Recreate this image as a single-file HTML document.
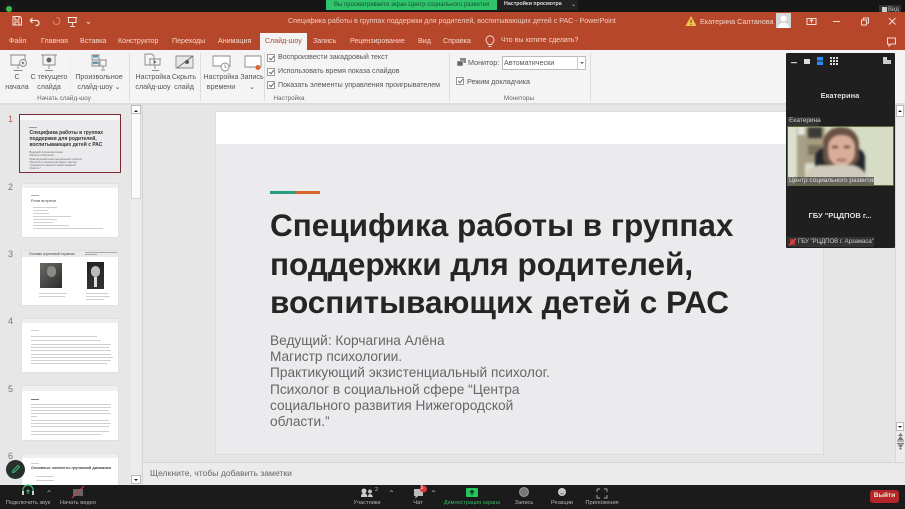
<!DOCTYPE html>
<html lang="ru"><head><meta charset="utf-8"><title>PowerPoint</title>
<style>
html,body{margin:0;padding:0}
body{width:905px;height:509px;overflow:hidden;position:relative;background:#e6e6e6;font-family:"Liberation Sans","Noto Sans CJK SC",sans-serif;color:#444}
div{position:absolute;box-sizing:border-box}
.t{white-space:nowrap;line-height:1}
.c{text-align:center;transform:translateX(-50%)}
.tab{top:36px;font-size:7.100px;color:#f3d9cf;white-space:nowrap;line-height:10px}
.rb{font-size:7.100px;color:#555;white-space:nowrap;line-height:9.500px;text-align:center;transform:translateX(-50%)}
.gl{font-size:6.300px;color:#666;white-space:nowrap;line-height:8px;transform:translateX(-50%)}
.cb{width:8px;height:8px;border:1px solid #999;background:#fff}
.cb:after{content:"";position:absolute;left:1.500px;top:0;width:2px;height:4px;border:solid #666;border-width:0 1px 1px 0;transform:rotate(40deg)}
.sep{top:53px;width:1px;height:48px;background:#dcdcdc}
.chk{left:278px;font-size:7.100px;color:#555}
.num{font-size:9px;color:#777;left:8px;line-height:10px}
.th{left:21px;width:98px;background:#fff;border:1px solid #e0e0e0;overflow:hidden}
.ln{height:1px;background:#cfcfcf;left:8px}
.tb{top:500px;font-size:5.700px;color:#b5b5b5;white-space:nowrap;line-height:7px;transform:translateX(-50%)}
</style></head><body>

<!-- top zoom bar -->
<div style="left:0;top:0;width:905px;height:12px;background:#161616"></div>
<div style="left:326px;top:0;width:171px;height:10px;background:#2fc46b"></div>
<div class="t" style="left:334px;top:2px;font-size:6px;color:#14532d">Вы просматриваете экран Центр социального развития</div>
<div style="left:497px;top:0;width:81px;height:10px;background:#222"></div>
<div class="t" style="left:504px;top:2px;font-size:5.300px;color:#ddd;font-weight:bold">Настройки просмотра</div>
<div class="t" style="left:571px;top:2px;font-size:6px;color:#ccc">⌄</div>
<div style="left:879px;top:5px;width:22px;height:10px;background:#333"></div>
<div style="left:882px;top:7px;width:5px;height:5px;background:#ccc"></div>
<div class="t" style="left:888px;top:7px;font-size:6px;color:#bbb">Вид</div>
<div style="left:3px;top:3px;width:12px;height:12px;border-radius:6px;background:#1a1a1a"></div>
<div style="left:6px;top:6px;width:6px;height:6px;border-radius:3px;background:#3dba4e"></div>

<!-- title bar & tabs -->
<div style="left:0;top:12px;width:905px;height:38px;background:#b7472a"></div>
<svg style="position:absolute;left:0;top:12px" width="100" height="22" fill="none" stroke="#f5e4dd">
<path d="M13 4.500h7l1.500 1.500v7h-8.500zM15 5v3h4V5M15 13v-3h4v3" stroke-width="1"/>
<path d="M30 8.500h6.500q2.500 0 2.500 2.500t-2.500 2.500h-1M30 8.500l2.500-2.500M30 8.500l2.500 2.500" stroke-width="1.200"/>
<path d="M53 9a3.500 3.500 0 1 0 3.500-3.500" stroke="#d98a70" stroke-width="1"/>
<path d="M67.500 5.500h9.500M68.500 5.500v5h7.500v-5M72.500 10.500v3M70 14.500h5" stroke-width="1"/>
<path d="M87 10l1.500 1.500 1.500-1.500" stroke-width=".8"/>
</svg>
<div class="t" style="left:288px;top:18px;font-size:7.100px;color:#eecdc1">Специфика работы в группах поддержки для родителей, воспитывающих детей с РАС  -  PowerPoint</div>
<svg style="position:absolute;left:685px;top:15px" width="12" height="12"><path d="M6 1L11.500 11H.5z" fill="#f2c14e"/><path d="M6 4.500v3.500M6 9v1" stroke="#5a4015" stroke-width="1"/></svg>
<div class="t" style="left:700px;top:18px;font-size:7.200px;color:#efd5ca">Екатерина Салтанова</div>
<div style="left:776px;top:13px;width:15px;height:15px;background:#d6d6d6"></div>
<svg style="position:absolute;left:776px;top:13px" width="15" height="15"><circle cx="7.500" cy="5.500" r="3" fill="#fff"/><path d="M2 15q0-5 5.500-5t5.500 5z" fill="#fff"/></svg>
<svg style="position:absolute;left:800px;top:12px" width="105" height="38" fill="none" stroke="#f3ddd4" stroke-width="1">
<path d="M7 6.500h9v6H7zM11.500 11V7.500M9.800 9l1.700-1.700L13.200 9"/>
<path d="M33 9.500h7"/>
<path d="M61.500 8h5v5h-5zM63.500 8V6h5v5h-2"/>
<path d="M89 6l6.500 6.500M95.500 6L89 12.500"/>
<path d="M87.500 26h8v6h-4.500l-2 2v-2h-1.500z"/>
</svg>

<div class="tab" style="left:9px">Файл</div>
<div class="tab" style="left:41px">Главная</div>
<div class="tab" style="left:80px">Вставка</div>
<div class="tab" style="left:118px">Конструктор</div>
<div class="tab" style="left:172px">Переходы</div>
<div class="tab" style="left:218px">Анимация</div>
<div style="left:260px;top:33px;width:47px;height:17px;background:#f3f3f3"></div>
<div class="tab" style="left:265px;color:#b5482c">Слайд-шоу</div>
<div class="tab" style="left:313px">Запись</div>
<div class="tab" style="left:350px">Рецензирование</div>
<div class="tab" style="left:418px">Вид</div>
<div class="tab" style="left:443px">Справка</div>
<svg style="position:absolute;left:484px;top:35px" width="12" height="13" fill="none" stroke="#f3ddd4"><path d="M3.500 8a4 4 0 1 1 5 0q-.7.7-.7 1.500H4.200q0-.8-.7-1.500zM4.500 11.500h3" stroke-width=".9"/></svg>
<div class="tab" style="left:501px;font-size:7px">Что вы хотите сделать?</div>

<!-- ribbon -->
<div style="left:0;top:50px;width:905px;height:53px;background:#f4f4f4"></div>
<div style="left:0;top:103px;width:905px;height:2px;background:#dcdcdc"></div>
<div class="sep" style="left:70px;background:#ececec"></div>
<div class="sep" style="left:129px"></div>
<div class="sep" style="left:200px"></div>
<div class="sep" style="left:264px"></div>
<div class="sep" style="left:449px"></div>
<div class="sep" style="left:590px"></div>

<svg style="position:absolute;left:0;top:50px" width="270" height="30" fill="none" stroke="#8a8a8a" stroke-width=".9">
<path d="M10 5h16M11 5v10h14V5M18 15v4M13.500 20.500h9"/><circle cx="23" cy="13" r="3.500" fill="#eee"/><path d="M22 11.500l2.500 1.500-2.500 1.500z" fill="#666" stroke="none"/>
<path d="M41 5h16M43 5v10h12V5M49 15v4M45 20.500h8"/><circle cx="49" cy="10" r="2.500" fill="#666" stroke="none"/>
<path d="M92 5h7v5h-7zM92 12h7v4h-7z" fill="#dfe8ea"/><path d="M93 5.500h5v2h-5zM93 12.500h5v1.500h-5z" fill="#4da0b5" stroke="none"/><path d="M99 10h8M100 10v6h6v-6M103 16v3M101 20h4"/>
<path d="M145 4h7l2 2v9h-9zM149 9h12M150 9v6h10V9M155 15v4M152 20.500h7"/><path d="M154 10.500l2.500 1.500-2.500 1.500z" fill="#555" stroke="none"/>
<path d="M176 6h17v12h-17z" fill="#e8e8e8"/><path d="M177 18L193 6" stroke="#666"/><circle cx="187" cy="12" r="2" fill="#555" stroke="none"/>
<path d="M213 6h17v10h-17z" fill="#fff"/><circle cx="225" cy="17" r="4" fill="#fff"/><path d="M225 14.500V17l1.500 1"/>
<path d="M245 6h16v11h-16z" fill="#fff"/><circle cx="258" cy="17.500" r="2.500" fill="#d9662f" stroke="none"/>
</svg>

<div class="rb" style="left:17px;top:73px">С<br>начала</div>
<div class="rb" style="left:49px;top:73px">С текущего<br>слайда</div>
<div class="rb" style="left:99px;top:73px">Произвольное<br>слайд-шоу ⌄</div>
<div class="rb" style="left:153px;top:73px">Настройка<br>слайд-шоу</div>
<div class="rb" style="left:184px;top:73px">Скрыть<br>слайд</div>
<div class="rb" style="left:221px;top:73px">Настройка<br>времени</div>
<div class="rb" style="left:252px;top:73px">Запись<br>⌄</div>
<div class="gl" style="left:64px;top:95px">Начать слайд-шоу</div>
<div class="gl" style="left:289px;top:95px">Настройка</div>
<div class="gl" style="left:519px;top:95px">Мониторы</div>

<div class="cb" style="left:267px;top:54px"></div>
<div class="t chk" style="top:54px">Воспроизвести закадровый текст</div>
<div class="cb" style="left:267px;top:68px"></div>
<div class="t chk" style="top:68px">Использовать время показа слайдов</div>
<div class="cb" style="left:267px;top:81px"></div>
<div class="t chk" style="top:82px">Показать элементы управления проигрывателем</div>
<svg style="position:absolute;left:456px;top:57px" width="11" height="11"><path d="M4 1h6v5H4z" fill="#888"/><path d="M1 4h6v5H1z" fill="#666" stroke="#eee" stroke-width=".6"/></svg>
<div class="t" style="left:468px;top:59px;font-size:7.200px;color:#555">Монитор:</div>
<div style="left:502px;top:56px;width:84px;height:14px;background:#fff;border:1px solid #bbb"></div>
<div style="left:577px;top:56px;width:1px;height:14px;background:#ccc"></div>
<div class="t" style="left:504px;top:59px;font-size:7.200px;color:#555">Автоматически</div>
<div style="left:580px;top:62px;width:0;height:0;border:2px solid transparent;border-top:2px solid #666"></div>
<div class="cb" style="left:456px;top:77px"></div>
<div class="t" style="left:467px;top:78px;font-size:7.200px;color:#555">Режим докладчика</div>

<!-- slide panel -->
<div style="left:0;top:105px;width:143px;height:380px;background:#e7e7e7"></div>
<div style="left:131px;top:105px;width:10px;height:380px;background:#ececec"></div>
<div style="left:131px;top:105px;width:10px;height:94px;background:#fbfbfb;border:1px solid #d6d6d6"></div>
<div style="left:131px;top:105px;width:10px;height:9px;background:#fff;border:1px solid #bbb"></div>
<div style="left:134px;top:108px;width:0;height:0;border:2px solid transparent;border-bottom:2px solid #222"></div>
<div style="left:131px;top:475px;width:10px;height:9px;background:#fff;border:1px solid #bbb"></div>
<div style="left:134px;top:479px;width:0;height:0;border:2px solid transparent;border-top:2px solid #222"></div>
<div style="left:142px;top:105px;width:1px;height:380px;background:#d4d4d4"></div>

<div class="num" style="color:#b5574a;top:114px">1</div>
<div class="num" style="top:182px">2</div>
<div class="num" style="top:249px">3</div>
<div class="num" style="top:316px">4</div>
<div class="num" style="top:384px">5</div>
<div class="num" style="top:451px">6</div>

<!-- thumbs -->
<div style="left:19px;top:114px;width:102px;height:59px;background:#ebebee;border:1.500px solid #7c2b35;overflow:hidden">
<div style="left:0;top:0;width:100px;height:5px;background:#f8f8f8"></div>
<div style="left:9px;top:12px;width:8px;height:1px;background:#999"></div>
<div style="left:9.500px;top:15px;font-size:5px;font-weight:bold;color:#333;line-height:6.200px;white-space:nowrap">Специфика работы в группах<br>поддержки для родителей,<br>воспитывающих детей с РАС</div>
<div style="left:9.500px;top:36px;font-size:2.600px;color:#666;line-height:3.300px;white-space:nowrap">Ведущий: Корчагина Алёна<br>Магистр психологии.<br>Практикующий экзистенциальный психолог.<br>Психолог в социальной сфере “Центра<br>социального развития Нижегородской<br>области.”</div>
</div>

<div class="th" style="top:183px;height:55px">
<div style="left:0;top:0;width:98px;height:4px;background:#efefef"></div>
<div style="left:9px;top:11px;width:8px;height:1px;background:#aaa"></div>
<div style="left:9px;top:14px;font-size:4px;color:#444;line-height:5px">Роли встречи</div>
<div class="ln" style="left:11px;top:23px;width:24px"></div>
<div class="ln" style="left:11px;top:26px;width:15px"></div>
<div class="ln" style="left:11px;top:29px;width:16px"></div>
<div class="ln" style="left:11px;top:32px;width:38px"></div>
<div class="ln" style="left:11px;top:35px;width:24px"></div>
<div class="ln" style="left:11px;top:38px;width:20px"></div>
<div class="ln" style="left:11px;top:41px;width:36px"></div>
<div class="ln" style="left:11px;top:44px;width:70px"></div>
</div>

<div class="th" style="top:250px;height:56px">
<div style="left:0;top:0;width:98px;height:6px;background:#eaeaea"></div>
<div style="left:7px;top:1px;font-size:3.600px;color:#444;line-height:5px;white-space:nowrap">Основы групповой терапии</div>
<div class="ln" style="left:63px;top:1px;width:32px;background:#aaa"></div>
<div class="ln" style="left:63px;top:3px;width:12px;background:#aaa"></div>
<div style="left:18px;top:12px;width:22px;height:25px;background:linear-gradient(135deg,#6a6a66,#2b2b2b)"></div>
<div style="left:25px;top:15px;width:9px;height:11px;border-radius:5px;background:#8a8a85"></div>
<div style="left:65px;top:11px;width:17px;height:27px;background:linear-gradient(#222,#333)"></div>
<div style="left:69px;top:15px;width:9px;height:11px;border-radius:5px;background:#bbb"></div>
<div style="left:72px;top:26px;width:3px;height:10px;background:#ddd"></div>
<div class="ln" style="left:17px;top:42px;width:28px"></div>
<div class="ln" style="left:17px;top:45px;width:26px"></div>
<div class="ln" style="left:64px;top:42px;width:22px"></div>
<div class="ln" style="left:64px;top:45px;width:24px"></div>
<div class="ln" style="left:64px;top:48px;width:18px"></div>
</div>

<div class="th" style="top:318px;height:55px">
<div style="left:0;top:0;width:98px;height:4px;background:#efefef"></div>
<div class="ln" style="left:9px;top:11px;width:8px"></div>
<div class="ln" style="left:9px;top:17px;width:66px"></div>
<div class="ln" style="left:9px;top:21px;width:70px"></div>
<div class="ln" style="left:9px;top:25px;width:80px"></div>
<div class="ln" style="left:9px;top:28px;width:78px"></div>
<div class="ln" style="left:9px;top:31px;width:80px"></div>
<div class="ln" style="left:9px;top:35px;width:80px"></div>
<div class="ln" style="left:9px;top:38px;width:82px"></div>
<div class="ln" style="left:9px;top:41px;width:80px"></div>
<div class="ln" style="left:9px;top:44px;width:76px"></div>
</div>

<div class="th" style="top:385px;height:56px">
<div style="left:0;top:0;width:98px;height:5px;background:#efefef"></div>
<div class="ln" style="left:9px;top:13px;width:8px;background:#777"></div>
<div class="ln" style="left:9px;top:18px;width:80px"></div>
<div class="ln" style="left:9px;top:21px;width:80px"></div>
<div class="ln" style="left:9px;top:24px;width:78px"></div>
<div class="ln" style="left:9px;top:27px;width:80px"></div>
<div class="ln" style="left:9px;top:30px;width:6px"></div>
<div class="ln" style="left:9px;top:34px;width:78px"></div>
<div class="ln" style="left:9px;top:37px;width:80px"></div>
<div class="ln" style="left:9px;top:40px;width:78px"></div>
<div class="ln" style="left:9px;top:45px;width:78px"></div>
<div class="ln" style="left:9px;top:48px;width:70px"></div>
</div>

<div class="th" style="top:453px;height:32px;border-bottom:0">
<div style="left:0;top:0;width:98px;height:4px;background:#efefef"></div>
<div class="ln" style="left:9px;top:9px;width:8px"></div>
<div style="left:9px;top:12px;font-size:3.800px;font-weight:bold;color:#444;line-height:5px;white-space:nowrap">Основные элементы групповой динамики</div>
<div class="ln" style="left:14px;top:22px;width:18px"></div>
<div class="ln" style="left:14px;top:26px;width:18px"></div>
</div>

<div style="left:6px;top:460px;width:19px;height:19px;border-radius:10px;background:#26302d"></div>
<svg style="position:absolute;left:6px;top:460px" width="19" height="19" fill="none" stroke="#3fbf76" stroke-width="1"><path d="M6.500 12.500l.5-2 5-5 1.500 1.500-5 5z"/></svg>

<!-- main editing area -->
<div style="left:143px;top:105px;width:762px;height:358px;background:#e6e6e6"></div>
<div style="left:215px;top:111px;width:609px;height:344px;background:#ebebee;border:1px solid #dcdcdc"></div>
<div style="left:216px;top:112px;width:607px;height:32px;background:#fff"></div>
<div style="left:270px;top:191px;width:25px;height:3px;background:#2a9b7f"></div>
<div style="left:295px;top:191px;width:25px;height:3px;background:#d9652c"></div>
<div style="left:270px;top:206px;font-size:31.500px;font-weight:bold;color:#252525;line-height:38.500px;white-space:nowrap">Специфика работы в группах<br>поддержки для родителей,<br>воспитывающих детей с РАС</div>
<div style="left:270px;top:333px;font-size:13.700px;color:#666;line-height:16.200px;white-space:nowrap">Ведущий: Корчагина Алёна<br>Магистр психологии.<br>Практикующий экзистенциальный психолог.<br>Психолог в социальной сфере “Центра<br>социального развития Нижегородской<br>области.”</div>

<!-- right scroll -->
<div style="left:895px;top:113px;width:10px;height:350px;background:#ececec"></div>
<div style="left:895px;top:105px;width:1px;height:358px;background:#d8d8d8"></div>
<div style="left:896px;top:105px;width:8px;height:12px;background:#fff;border:1px solid #bbb"></div>
<div style="left:898px;top:108px;width:0;height:0;border:2px solid transparent;border-bottom:2px solid #222"></div>
<div style="left:896px;top:422px;width:8px;height:9px;background:#fff;border:1px solid #bbb"></div>
<div style="left:898px;top:426px;width:0;height:0;border:2px solid transparent;border-top:2px solid #222"></div>
<svg style="position:absolute;left:896px;top:433px" width="9" height="18" fill="#777"><path d="M4.500 0L7 3H2zM4.500 3L7.500 7h-6zM1 7.500h7v1H1zM1 10h7v1H1zM1.500 11.500h6L4.500 15zM3 15h3l-1.500 2z"/></svg>

<!-- notes -->
<div style="left:143px;top:462px;width:762px;height:1px;background:#d4d4d4"></div>
<div style="left:143px;top:463px;width:762px;height:22px;background:#ebebeb"></div>
<div class="t" style="left:150px;top:469px;font-size:8.600px;color:#666">Щелкните, чтобы добавить заметки</div>

<!-- zoom video panel -->
<div style="left:786px;top:53px;width:109px;height:195px;background:#1f1f1f;border-radius:1px"></div>
<svg style="position:absolute;left:786px;top:53px" width="109" height="20">
<path d="M5 9h6v1.200H5z" fill="#ccc"/><path d="M18 6h6v5h-6z" fill="#ddd"/>
<path d="M31 4h6v3.500h-6zM31 8.500h6V12h-6z" fill="#2d8cff"/>
<path d="M44 4h2v2h-2zM47 4h2v2h-2zM50 4h2v2h-2zM44 7h2v2h-2zM47 7h2v2h-2zM50 7h2v2h-2zM44 10h2v2h-2zM47 10h2v2h-2zM50 10h2v2h-2z" fill="#ddd"/>
<path d="M97 4h8v7h-8z" fill="#ccc"/><path d="M101 4h4v3h-4z" fill="#1f1f1f"/>
</svg>
<div class="t c" style="left:840px;top:92px;font-size:7.500px;font-weight:bold;color:#ddd">Екатерина</div>
<div style="left:787px;top:117px;width:32px;height:9px;background:#333"></div>
<div class="t" style="left:789px;top:118px;font-size:6.500px;color:#ccc">Екатерина</div>
<div style="left:787px;top:126px;width:107px;height:60px;background:#d7dcc5;overflow:hidden;border:1px solid #5c6a3c">
<div style="left:0;top:0;width:105px;height:58px;filter:blur(1.200px)">
<div style="left:0;top:0;width:9px;height:58px;background:#dde0cf"></div>
<div style="left:9px;top:0;width:8px;height:56px;background:#a8a088"></div>
<div style="left:17px;top:0;width:20px;height:36px;background:#a79c80"></div>
<div style="left:10px;top:0;width:7px;height:8px;background:#e6e6dc"></div>
<div style="left:20px;top:0;width:14px;height:11px;background:#3a3a36"></div>
<div style="left:20px;top:18px;width:14px;height:10px;background:#7a7560"></div>
<div style="left:27px;top:21px;width:50px;height:25px;background:#23262b;border-radius:10px 10px 0 0"></div>
<div style="left:35px;top:0;width:36px;height:38px;background:#6a5243;border-radius:17px 17px 8px 8px"></div>
<div style="left:40px;top:8px;width:27px;height:31px;background:#d8ae9a;border-radius:12px 12px 13px 13px"></div>
<div style="left:44px;top:19px;width:6px;height:2px;background:#5f4238"></div>
<div style="left:56px;top:19px;width:6px;height:2px;background:#5f4238"></div>
<div style="left:49px;top:32px;width:9px;height:2px;background:#9c5f58"></div>
<div style="left:17px;top:38px;width:62px;height:20px;background:#cfcabb;border-radius:16px 16px 0 0"></div>
</div>
<div style="left:0;top:50px;width:86px;height:8px;background:rgba(60,60,55,.72)"></div>
<div class="t" style="left:1px;top:51px;font-size:6.500px;color:#ddd">Центр социального развития</div>
</div>
<div class="t c" style="left:840px;top:212px;font-size:7.500px;font-weight:bold;color:#ddd">ГБУ "РЦДПОВ г...</div>
<div style="left:787px;top:237px;width:87px;height:10px;background:#333"></div>
<svg style="position:absolute;left:788px;top:238px" width="9" height="8"><path d="M2 1h5v6H2z" fill="#b33"/><path d="M1 7.500L8 .5" stroke="#e55" stroke-width="1"/></svg>
<div class="t" style="left:798px;top:239px;font-size:6px;color:#ccc">ГБУ "РЦДПОВ г. Арзамаса"</div>

<!-- zoom toolbar -->
<div style="left:0;top:485px;width:905px;height:24px;background:#1b1b1b"></div>
<svg style="position:absolute;left:0;top:483px" width="905" height="24" fill="none">
<path d="M23 9v-2a5 5 0 0 1 10 0v2" stroke="#3fbf76" stroke-width="1.200"/><path d="M22 8h2v4h-2zM32 8h2v4h-2z" fill="#ccc"/><path d="M28 11V7M26.500 8.500L28 7l1.500 1.500" stroke="#3fbf76"/>
<path d="M47.500 9l1.500-1.500L50.500 9" stroke="#aaa" stroke-width=".7"/>
<path d="M73 6h10v7h-10z" fill="#666"/><path d="M83 7.500l-2 1.500v2l2 1.500z" fill="#666"/><path d="M72 15L84 3" stroke="#e0383e" stroke-width="1"/>
<circle cx="364" cy="8" r="2.500" fill="#ccc"/><circle cx="370" cy="8.500" r="2" fill="#bbb"/><path d="M361 14q0-4 3-4t3.500 4zM368 14q0-3 2-3t3 3z" fill="#ccc"/>
<path d="M390 9l1.500-1.500L393 9" stroke="#aaa" stroke-width=".7"/>
<path d="M414 6h9v7h-5l-2.500 2.500V13H414z" fill="#bbb"/><circle cx="423.500" cy="6" r="3.500" fill="#e0383e"/>
<path d="M432 9l1.500-1.500L435 9" stroke="#aaa" stroke-width=".7"/>
<rect x="466" y="5" width="12" height="9" rx="1" fill="#22c55e"/><path d="M472 12V7.500M470 9.500l2-2 2 2" stroke="#111" stroke-width="1"/>
<circle cx="524" cy="9" r="4.500" fill="#777" stroke="#aaa" stroke-width=".8"/>
<circle cx="562" cy="9" r="4" fill="#ccc"/><path d="M560 8.500v-.5M564 8.500v-.5M560.500 10.500q1.500 1 3 0" stroke="#222" stroke-width=".7"/>
<path d="M597 6h3M604 6h3v3M607 12v3h-3M600 15h-3v-3M597 9V6" stroke="#aaa" stroke-width=".9"/>
</svg>
<div class="t" style="left:420.500px;top:486px;font-size:5px;color:#fff">5</div>
<div class="t" style="left:375px;top:488px;font-size:5.500px;color:#bbb">2</div>
<div class="tb" style="left:28px">Подключить звук</div>
<div class="tb" style="left:78px">Начать видео</div>
<div class="tb" style="left:367px">Участники</div>
<div class="tb" style="left:418px">Чат</div>
<div class="tb" style="left:472px;color:#35b765;font-size:5.500px">Демонстрация экрана</div>
<div class="tb" style="left:524px">Запись</div>
<div class="tb" style="left:562px">Реакции</div>
<div class="tb" style="left:602px">Приложения</div>
<div style="left:870px;top:490px;width:29px;height:13px;background:#b3262b;border-radius:3px"></div>
<div class="t c" style="left:884.500px;top:493px;font-size:6.500px;font-weight:bold;color:#eec">Выйти</div>
</body></html>
